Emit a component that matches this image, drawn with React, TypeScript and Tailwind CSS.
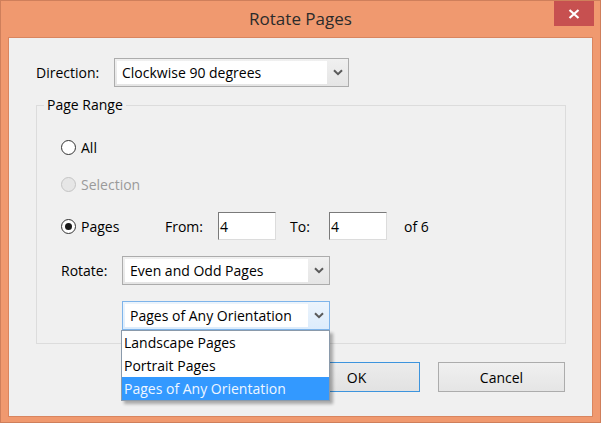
import React from 'react';

const Chevron: React.FC = () => (
  <svg width="10" height="7" viewBox="0 0 10 7" className="block">
    <path d="M1 1.2 L5 5.2 L9 1.2" fill="none" stroke="#5a5a5a" strokeWidth="2" />
  </svg>
);

const Combo: React.FC<{ value: string; width: string; focused?: boolean }> = ({ value, width, focused }) => (
  <div
    className={`flex h-[29px] items-stretch border ${width} ${
      focused
        ? 'border-[#7eb4ea] bg-gradient-to-b from-[#ecf4fc] to-[#dcecfc]'
        : 'border-[#acacac] bg-gradient-to-b from-[#f0f0f0] to-[#e5e5e5]'
    }`}
  >
    <div className="my-[2px] ml-[2px] flex flex-1 items-center bg-white pl-[5px] text-black">{value}</div>
    <div className="flex w-[21px] items-center justify-center">
      <Chevron />
    </div>
  </div>
);

const Radio: React.FC<{ checked?: boolean; disabled?: boolean }> = ({ checked, disabled }) => (
  <div
    className={`flex h-[15px] w-[15px] items-center justify-center rounded-full border ${
      disabled ? 'border-[#c4c4c4] bg-[#e6e6e6]' : 'border-[#333333] bg-white'
    }`}
  >
    {checked && <div className="h-[7px] w-[7px] rounded-full bg-[#1a1a1a]" />}
  </div>
);

const TextBox: React.FC<{ value: string }> = ({ value }) => (
  <div className="flex h-[28px] w-[58px] items-center border border-t-[#7a7a7a] border-l-[#7a7a7a] border-r-[#dcdcdc] border-b-[#dcdcdc] bg-white pl-[1px]">
    {value}
  </div>
);

const App: React.FC = () => {
  return (
    <div
      className="flex h-[423px] w-[601px] flex-col border border-[#cf7f5b] bg-[#f0996f] text-[14px] text-black"
      style={{ fontFamily: '"Open Sans", "Noto Sans", sans-serif' }}
    >
      {/* title bar */}
      <div className="grid h-[36px] grid-cols-[1fr_auto_1fr]">
        <div />
        <div className="pt-[5px] text-[17px] text-[#2b2b2b]">Rotate Pages</div>
        <div className="flex justify-end pr-[6px]">
          <div className="flex h-[25px] w-[40px] items-center justify-center bg-[#c75050]">
            <svg width="12" height="10" viewBox="0 0 12 10">
              <path d="M1.5 1 L10.5 9 M10.5 1 L1.5 9" stroke="white" strokeWidth="2.2" />
            </svg>
          </div>
        </div>
      </div>

      {/* client */}
      <div className="mx-[7px] mb-[5px] flex h-[380px] flex-col border border-[#d9855f] bg-[#f0f0f0] pl-[27px] pr-[26px] pt-[20px]">
        <div className="flex items-center">
          <div className="w-[78px]">Direction:</div>
          <Combo value="Clockwise 90 degrees" width="w-[235px]" />
        </div>

        <fieldset className="mt-[8px] w-[530px] border border-[#dcdcdc] pb-[13px] pl-[24px] pr-0">
          <legend className="-ml-[17px] h-[20px] px-[3px] leading-[20px]">Page Range</legend>

          <div className="mt-[20px] flex h-[24px] items-center">
            <Radio />
            <span className="ml-[5px]">All</span>
          </div>

          <div className="mt-[13px] flex h-[24px] items-center text-[#9a9a9a]">
            <Radio disabled />
            <span className="ml-[5px]">Selection</span>
          </div>

          <div className="mt-[16px] flex h-[28px] items-center">
            <div className="flex w-[104px] items-center">
              <Radio checked />
              <span className="ml-[5px]">Pages</span>
            </div>
            <div className="w-[53px]">From:</div>
            <TextBox value="4" />
            <div className="ml-[14px] w-[39px]">To:</div>
            <TextBox value="4" />
            <div className="ml-[17px]">of 6</div>
          </div>

          <div className="mt-[16px] flex items-center">
            <div className="w-[61px]">Rotate:</div>
            <Combo value="Even and Odd Pages" width="w-[208px]" />
          </div>

          <div className="ml-[61px] mt-[16px] w-[208px] relative">
            <Combo value="Pages of Any Orientation" width="w-[208px]" focused />
            <div className="absolute left-[-1px] top-full z-10 w-[209px] border border-[#8a9aab] bg-white shadow-[3px_3px_3px_rgba(0,0,0,0.3)]">
              <div className="flex h-[23px] items-center pl-[2px]">Landscape Pages</div>
              <div className="flex h-[23px] items-center pl-[2px]">Portrait Pages</div>
              <div className="flex h-[23px] items-center bg-[#3399ff] pl-[2px] text-[#eef6ff]">Pages of Any Orientation</div>
            </div>
          </div>
        </fieldset>

        <div className="mt-[18px] flex justify-end gap-[18px] pr-[1px]">
          <div className="flex h-[30px] w-[127px] items-center justify-center border border-[#3d94dd] bg-gradient-to-b from-[#ececec] to-[#e2e2e2]">
            OK
          </div>
          <div className="flex h-[30px] w-[127px] items-center justify-center border border-[#acacac] bg-gradient-to-b from-[#f0f0f0] to-[#e5e5e5]">
            Cancel
          </div>
        </div>
      </div>
    </div>
  );
};

export default App;
